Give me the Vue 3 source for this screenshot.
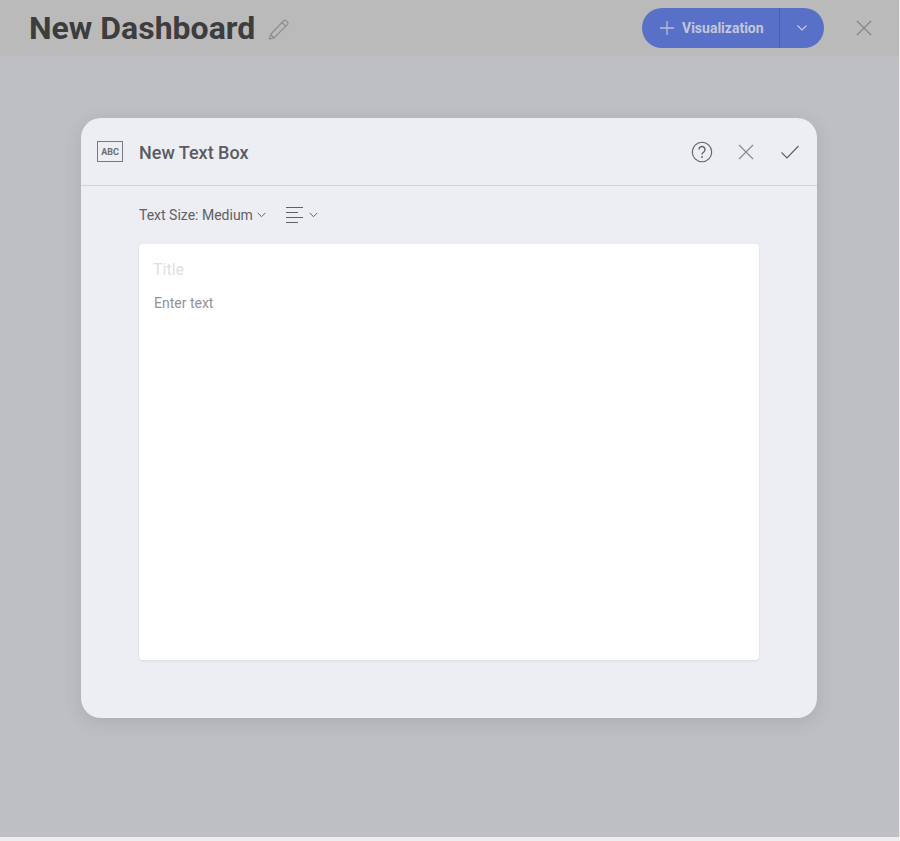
<script setup>
</script>

<template>
  <div class="page">
    <div class="stage">
      <header class="top">
        <h1 class="title">New Dashboard</h1>
        <svg class="pencil" width="24" height="24" viewBox="0 0 24 24" fill="none" stroke="#8a8a8a" stroke-width="1.1">
          <path d="M3.5 17.5 16.8 3.6a1.6 1.6 0 0 1 2.2 0l1.6 1.5a1.6 1.6 0 0 1 0 2.2L7 21l-4.500 1z" />
          <path d="m15 5.500 4 3.800M3.500 17.500 7 21" />
        </svg>
        <div class="split">
          <button class="add" type="button">
            <svg width="16" height="16" viewBox="0 0 16 16" fill="none" stroke="#b9bdd8" stroke-width="1.3"><path d="M8 1v14M1 8h14" /></svg>
            <span>Visualization</span>
          </button>
          <button class="more" type="button">
            <svg width="12" height="8" viewBox="0 0 12 8" fill="none" stroke="#c9cce0" stroke-width="1.1"><path d="m1.500 1.500 4.500 4.500 4.500-4.500" /></svg>
          </button>
        </div>
        <svg class="close-top" width="18" height="18" viewBox="0 0 18 18" fill="none" stroke="#848484" stroke-width="1.100"><path d="m2 2 14 14M16 2 2 16" /></svg>
      </header>
      <main class="work">
        <section class="modal">
          <div class="modal-head">
            <div class="abc"><span>ABC</span></div>
            <h2>New Text Box</h2>
            <div class="actions">
              <svg class="help" width="22" height="22" viewBox="0 0 22 22" fill="none" stroke="#5e6066" stroke-width="1.100">
                <circle cx="11" cy="11" r="9.700" />
                <path d="M8 8.500a3 3 0 1 1 4.700 2.500c-1.100.7-1.700 1.200-1.700 2.500" stroke-width="1.400" />
                <circle cx="11" cy="16" r=".9" fill="#5e6066" stroke="none" />
              </svg>
              <svg width="16" height="16" viewBox="0 0 16 16" fill="none" stroke="#85878c" stroke-width="1.100"><path d="m1 1 14 14M15 1 1 15" /></svg>
              <svg width="20" height="14" viewBox="0 0 20 14" fill="none" stroke="#5e6066" stroke-width="1.200"><path d="m1.500 7.500 5.500 5.500L18.500 1" /></svg>
            </div>
          </div>
          <div class="tools">
            <span class="size">Text Size: Medium</span>
            <svg class="chev" width="9" height="6" viewBox="0 0 9 6" fill="none" stroke="#5e6066" stroke-width="1"><path d="m.7.900 3.800 3.800L8.300.9" /></svg>
            <svg class="align" width="18" height="16" viewBox="0 0 18 16" fill="none" stroke="#5e6066" stroke-width="1"><path d="M0 .5h17M0 5.500h12M0 10.500h17M0 15.500h12" /></svg>
            <svg class="chev" width="9" height="6" viewBox="0 0 9 6" fill="none" stroke="#5e6066" stroke-width="1"><path d="m.7.900 3.800 3.800L8.300.9" /></svg>
          </div>
          <div class="sheet">
            <div class="ph-title">Title</div>
            <div class="ph-text">Enter text</div>
          </div>
        </section>
      </main>
    </div>
  </div>
</template>

<style>
html, body { background: #eeeeee; }
</style>

<style scoped>
.page {
  width: 900px;
  height: 841px;
  background: #eeeeee;
  font-family: Roboto, "Liberation Sans", sans-serif;
  overflow: hidden;
}
.stage {
  width: 899px;
  height: 837px;
  display: flex;
  flex-direction: column;
  background: #bebfc4;
}
.top {
  height: 56px;
  flex: none;
  background: #bababa;
  display: flex;
  align-items: center;
  padding: 0 26px 0 29px;
  box-sizing: border-box;
}
.title {
  margin: 0;
  font-size: 32px;
  font-weight: 700;
  line-height: 56px;
  color: #3d3d3d;
}
.pencil { margin-left: 12px; margin-top: 1px; }
.split {
  margin-left: auto;
  width: 182px;
  height: 40px;
  border-radius: 20px;
  background: #5870c8;
  display: flex;
  overflow: hidden;
}
.add, .more {
  border: 0;
  padding: 0;
  background: none;
  display: flex;
  align-items: center;
  font: inherit;
}
.add {
  width: 138px;
  padding-left: 17px;
  gap: 7px;
  border-right: 1px solid #4a60b0;
  color: #c3c7dc;
  font-size: 14px;
  font-weight: 700;
}
.more { flex: 1; justify-content: center; }
.close-top { margin-left: 31px; }
.work {
  flex: 1;
  display: flex;
  justify-content: center;
  padding-top: 62px;
  padding-right: 1px;
}
.modal {
  width: 736px;
  height: 600px;
  border-radius: 20px;
  background: #edeef3;
  box-shadow: 0 4px 20px rgba(0, 0, 0, .1);
  display: flex;
  flex-direction: column;
}
.modal-head {
  height: 68px;
  flex: none;
  box-sizing: border-box;
  border-bottom: 1px solid #d2d3d9;
  display: flex;
  align-items: center;
  padding: 0 17px 0 16px;
}
.abc {
  width: 26px;
  height: 21px;
  box-sizing: border-box;
  border: 1px solid #77797f;
  display: flex;
  align-items: center;
  justify-content: center;
  font-size: 9px;
  font-weight: 700;
  color: #6a6c72;
}
.modal-head h2 {
  margin: 2px 0 0 16px;
  font-size: 18px;
  font-weight: 500;
  color: #5b5c62;
}
.actions {
  margin-left: auto;
  display: flex;
  align-items: center;
  gap: 26px;
}
.help { margin-right: -1px; }
.tools {
  height: 58px;
  flex: none;
  display: flex;
  align-items: center;
  padding-left: 58px;
  color: #5e6066;
  font-size: 14px;
}
.size { margin-right: 4px; }
.align { margin-left: 20px; margin-right: 5px; }
.sheet {
  margin: 0 58px;
  height: 416px;
  box-sizing: border-box;
  background: #fff;
  border-radius: 4px;
  box-shadow: 0 1px 3px rgba(0, 0, 0, .08);
  padding: 16px 15px;
}
.ph-title { font-size: 16px; line-height: 20px; color: #dfdfe2; margin-left: -1px; }
.ph-text { font-size: 14px; line-height: 18px; color: #929297; margin-top: 14px; }
</style>
